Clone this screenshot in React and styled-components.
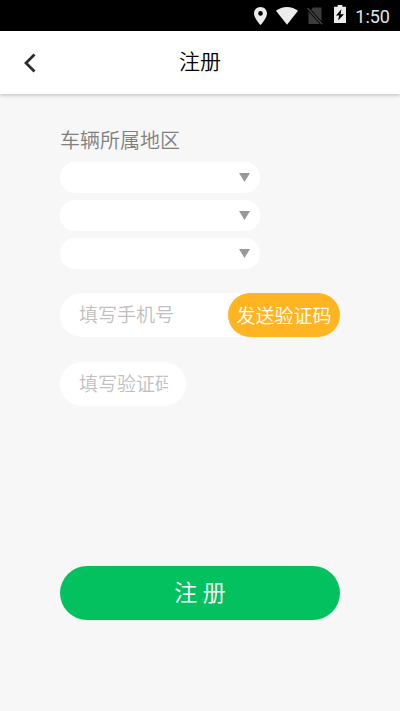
import { useState } from "react";

import styled, { createGlobalStyle } from "styled-components";

const regionLevels = ["省份", "城市", "区县"];

const App = () => {
  const [phone, setPhone] = useState("");
  const [code, setCode] = useState("");

  return (
    <Page>
      <GlobalStyle />
      <StatusBar>
        <StatusIcon width="13" height="18" viewBox="0 0 13 18">
          <path
            fillRule="evenodd"
            d="M6.5 0C2.9 0 0 2.8 0 6.4 0 11 6.5 18 6.5 18S13 11 13 6.4C13 2.8 10.1 0 6.5 0Zm0 4.1a2.3 2.3 0 1 1 0 4.6 2.3 2.3 0 0 1 0-4.6Z"
          />
        </StatusIcon>
        <StatusIcon width="22" height="18" viewBox="0 0 22 18">
          <path d="M0 3.8C3.1 1.3 6.9 0 11 0s7.9 1.3 11 3.8L11 17.8Z" />
        </StatusIcon>
        <StatusIcon width="16" height="18" viewBox="0 0 16 18" $dim>
          <path d="M6 0.500h8.500V14.200L4 2.600ZM1.500 4.500 12.800 17H1.500Z" />
          <path d="M0.600 1.200 15.200 17.300" fill="none" stroke="#444" strokeWidth="1.400" />
        </StatusIcon>
        <StatusIcon width="12" height="18" viewBox="0 0 12 18" $raised>
          <path
            fillRule="evenodd"
            d="M3.6 0h4.800v1.800H12V18H0V1.800h3.600ZM7.400 4.300 2 10.400h3.100l-1 5.100 5.900-6.300H6.600Z"
          />
        </StatusIcon>
        <Clock>1:50</Clock>
      </StatusBar>
      <Header>
        <BackButton type="button" aria-label="返回">
          <svg width="12" height="20" viewBox="0 0 12 20">
            <path d="M10.5 1.5 2 10l8.5 8.5" fill="none" stroke="#2b2b30" strokeWidth="2.8" />
          </svg>
        </BackButton>
        <Title>注册</Title>
      </Header>
      <Form onSubmit={(e) => e.preventDefault()}>
        <RegionGroup>
          <RegionLegend>车辆所属地区</RegionLegend>
          <RegionList>
            {regionLevels.map((level) => (
              <SelectWrapper key={level}>
                <Select aria-label={level} defaultValue="">
                  <option value="" />
                </Select>
                <Arrow width="11" height="9" viewBox="0 0 11 9">
                  <path d="M0 0h11L5.5 9Z" />
                </Arrow>
              </SelectWrapper>
            ))}
          </RegionList>
        </RegionGroup>
        <PhoneRow>
          <Input
            type="tel"
            aria-label="手机号"
            placeholder="填写手机号"
            value={phone}
            onChange={(e) => setPhone(e.target.value)}
          />
          <SendButton type="button">发送验证码</SendButton>
        </PhoneRow>
        <CodeRow>
          <Input
            type="text"
            aria-label="验证码"
            placeholder="填写验证码"
            value={code}
            onChange={(e) => setCode(e.target.value)}
          />
        </CodeRow>
        <SubmitButton type="submit">注 册</SubmitButton>
      </Form>
    </Page>
  );
};

export default App;

const GlobalStyle = createGlobalStyle`
  * {
    box-sizing: border-box;
  }

  body {
    margin: 0;
    background-color: #f7f7f7;
  }

  body, button, input, select {
    font-family: Roboto, "Noto Sans CJK SC", sans-serif;
    font-weight: 350;
  }
`;

const Page = styled.div`
  display: flex;
  flex-direction: column;
  min-height: 100vh;
`;

const StatusBar = styled.div`
  display: flex;
  align-items: center;
  justify-content: flex-end;
  gap: 9px;
  height: 31px;
  padding-right: 10px;
  background-color: #000;
`;

const StatusIcon = styled.svg`
  fill: ${({ $dim }) => ($dim ? "#3c3c3c" : "#ececec")};
  margin-bottom: ${({ $raised }) => ($raised ? "3px" : "0")};
  margin-left: ${({ $raised }) => ($raised ? "2px" : "0")};
`;

const Clock = styled.span`
  padding-top: 2px;
  color: #e4e4e4;
  font-size: 18px;
  font-weight: 400;
  line-height: 30px;
`;

const Header = styled.header`
  display: grid;
  grid-template-columns: 60px 1fr 60px;
  align-items: center;
  height: 63px;
  background-color: #fff;
  box-shadow: 0 1px 4px rgba(0, 0, 0, 0.25);
`;

const BackButton = styled.button`
  display: flex;
  align-items: center;
  justify-content: center;
  height: 60px;
  padding: 0;
  border: none;
  background: none;
`;

const Title = styled.h1`
  margin: 0;
  padding-bottom: 2px;
  color: #000;
  font-size: 21px;
  font-weight: 350;
  line-height: 32px;
  text-align: center;
`;

const Form = styled.form`
  display: flex;
  flex-direction: column;
  padding: 32px 15% 40px;
`;

const RegionGroup = styled.fieldset`
  min-width: 0;
  margin: 0;
  padding: 0;
  border: none;
`;

const RegionLegend = styled.legend`
  padding: 0;
  color: #808080;
  font-size: 20px;
  line-height: 30px;
`;

const RegionList = styled.div`
  display: grid;
  grid-template-columns: 200px;
  gap: 7px;
  padding-top: 6px;
`;

const SelectWrapper = styled.div`
  display: grid;
  align-items: center;

  > * {
    grid-area: 1 / 1;
  }
`;

const Select = styled.select`
  appearance: none;
  width: 100%;
  height: 31px;
  padding: 0 32px 0 16px;
  border: none;
  border-radius: 15px;
  background-color: #fff;
  font-size: 16px;
`;

const Arrow = styled.svg`
  justify-self: end;
  margin-right: 10px;
  fill: #999;
  pointer-events: none;
`;

const PhoneRow = styled.div`
  display: flex;
  height: 44px;
  margin-top: 24px;
  border-radius: 22px;
  background-color: #fff;
`;

const CodeRow = styled.div`
  display: flex;
  width: 45%;
  height: 44px;
  margin-top: 25px;
  border-radius: 22px;
  background-color: #fff;
`;

const Input = styled.input`
  flex: 1;
  min-width: 0;
  padding: 0 18px 0 19px;
  border: none;
  outline: none;
  background: none;
  color: #333;
  font-size: 19px;

  &::placeholder {
    color: #c0c0c0;
  }
`;

const SendButton = styled.button`
  width: 40%;
  padding: 0 0 2px;
  border: none;
  border-radius: 22px;
  background-color: #ffb422;
  color: #fff;
  font-size: 19px;
  white-space: nowrap;
`;

const SubmitButton = styled.button`
  height: 54px;
  margin-top: 160px;
  padding: 0 0 4px;
  border: none;
  border-radius: 27px;
  background-color: #04c15f;
  color: #fff;
  font-size: 23px;
`;
